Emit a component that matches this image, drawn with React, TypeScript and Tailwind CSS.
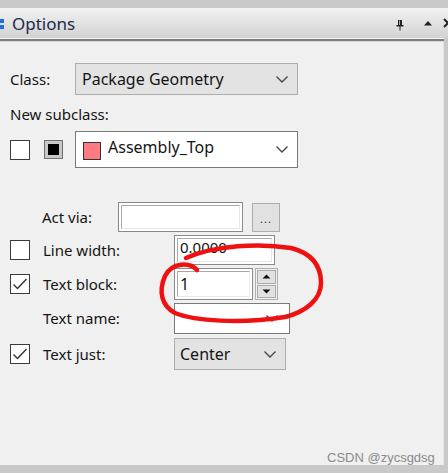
import React from "react";

const font = { fontFamily: '"Noto Sans", "Open Sans", Arial, sans-serif' };

function Chevron() {
  return (
    <svg width="14" height="9" viewBox="0 0 14 9" className="shrink-0">
      <path d="M1.5 1.5 L7 7 L12.5 1.5" fill="none" stroke="#444" strokeWidth="1.3" />
    </svg>
  );
}

function CheckBox({ checked }: { checked?: boolean }) {
  return (
    <div className="w-[20px] h-[20px] bg-white border-[1.5px] border-[#3a3a3a] shrink-0 flex items-center justify-center">
      {checked && (
        <svg width="16" height="14" viewBox="0 0 16 14">
          <path d="M1.5 7.5 L5.5 11.5 L14.5 2" fill="none" stroke="#333" strokeWidth="1.4" />
        </svg>
      )}
    </div>
  );
}

function Sunken({ className, children }: { className: string; children?: React.ReactNode }) {
  return (
    <div className={"border-[1.5px] border-[#8a8a8a] bg-white p-[2px] " + className}>
      <div className="w-full h-full border border-[#a8a8a8] border-r-[#e8e8e8] border-b-[#e8e8e8] bg-white flex items-center px-[2px] text-[15px] leading-none text-[#111]">
        {children}
      </div>
    </div>
  );
}

export default function App() {
  return (
    <div className="w-[448px] h-[473px] bg-[#c9c9c9] flex flex-col overflow-hidden relative" style={font}>
      <div className="h-[8px] shrink-0" />
      {/* header */}
      <div className="h-[30px] shrink-0 bg-gradient-to-b from-[#f2f2f2] to-[#d2d2d2] flex items-center relative">
        <div className="flex flex-col gap-[2px] ml-0 mt-[1px]">
          <div className="w-[4px] h-[4px] bg-[#1e6fd6]" />
          <div className="w-[4px] h-[4px] bg-[#1e6fd6]" />
        </div>
        <span className="ml-[8px] text-[17px] text-[#1d2a4c] leading-none">Options</span>
        <div className="flex-1" />
        <svg width="10" height="12" viewBox="0 0 10 12" className="mr-[18px] mt-[3px]">
          <path d="M3 1 H7 V6 H8.5 V7.5 H1.5 V6 H3 Z M4.5 7.5 V11.5 H5.5 V7.5" fill="#222" />
          <rect x="4" y="1.5" width="1" height="4.5" fill="#aaa" />
        </svg>
        <svg width="10" height="6" viewBox="0 0 10 6" className="mr-[10px]">
          <path d="M1 5.5 L5 1 L9 5.5 Z" fill="#222" />
        </svg>
        <svg width="6" height="10" viewBox="0 0 6 10" className="mr-[-1px]">
          <path d="M1 1 L5 5 L1 9" fill="none" stroke="#222" strokeWidth="2" />
        </svg>
      </div>
      {/* separator */}
      <div className="w-[444px] h-[1px] bg-[#f4f4f4] shrink-0" />
      <div className="w-[444px] h-[2px] bg-[#7d7d7d] shrink-0" />
      <div className="w-[444px] h-[1px] bg-[#d8d8d8] shrink-0" />
      {/* body */}
      <div className="w-[444px] flex-1 bg-[#f0f0f0] border-r border-[#e4e4e4] pl-[10px] flex flex-col text-[15px] text-[#151515] relative">
        {/* Class row */}
        <div className="mt-[21px] h-[32px] flex items-center">
          <span className="w-[65px]">Class:</span>
          <div className="w-[223px] h-[32px] bg-[#e3e3e3] border border-[#adadad] flex items-center pl-[6px] pr-[8px]">
            <span className="flex-1 text-[16px]">Package Geometry</span>
            <Chevron />
          </div>
        </div>
        {/* New subclass */}
        <div className="mt-[7px] h-[24px] flex items-center">New subclass:</div>
        {/* subclass row */}
        <div className="mt-[5px] h-[37px] flex items-center">
          <CheckBox />
          <div className="ml-[14px] w-[19px] h-[19px] border border-[#707070] bg-[#c8c8c8] flex items-center justify-center">
            <div className="w-[11px] h-[11px] bg-black" />
          </div>
          <div className="ml-[12px] w-[223px] h-[37px] bg-white border border-[#7a7a7a] flex items-center pl-[7px] pr-[8px]">
            <div className="w-[18px] h-[18px] bg-[#fc7a80] border border-[#333] mt-[3px]" />
            <span className="ml-[7px] flex-1 text-[16px] -mt-[6px]">Assembly_Top</span>
            <Chevron />
          </div>
        </div>
        {/* Act via */}
        <div className="mt-[34px] h-[30px] flex items-center">
          <span className="ml-[32px] w-[76px]">Act via:</span>
          <Sunken className="w-[125px] h-[30px]" />
          <div className="ml-[9px] w-[28px] h-[29px] bg-[#e1e1e1] border border-[#adadad] flex items-end justify-center pb-[7px]">
            <span className="text-[11px] leading-none tracking-[1px] text-[#333]">...</span>
          </div>
        </div>
        {/* Line width */}
        <div className="mt-[3px] h-[30px] flex items-center">
          <CheckBox />
          <span className="ml-[13px] w-[131px]">Line width:</span>
          <Sunken className="w-[101px] h-[30px]">
            <span className="-mt-[6px]">0.0000</span>
          </Sunken>
        </div>
        {/* Text block */}
        <div className="mt-[3px] h-[32px] flex items-center">
          <CheckBox checked />
          <span className="ml-[13px] w-[131px]">Text block:</span>
          <Sunken className="w-[79px] h-[32px]">
            <span className="text-[16px]">1</span>
          </Sunken>
          <div className="ml-[2px] h-[32px] w-[23px] border border-[#b0b0b0] flex flex-col p-[1px] gap-[1px]">
            <div className="flex-1 bg-[#e1e1e1] border border-[#adadad] flex items-center justify-center">
              <svg width="9" height="5" viewBox="0 0 9 5"><path d="M0.5 4.5 L4.5 0.5 L8.5 4.5 Z" fill="#111" /></svg>
            </div>
            <div className="flex-1 bg-[#e1e1e1] border border-[#adadad] flex items-center justify-center">
              <svg width="9" height="5" viewBox="0 0 9 5"><path d="M0.5 0.5 L4.5 4.5 L8.5 0.5 Z" fill="#111" /></svg>
            </div>
          </div>
        </div>
        {/* Text name */}
        <div className="mt-[3px] h-[31px] flex items-center">
          <span className="ml-[33px] w-[131px]">Text name:</span>
          <div className="w-[116px] h-[31px] bg-white border border-[#7a7a7a] flex items-center justify-end pr-[10px]">
            <Chevron />
          </div>
        </div>
        {/* Text just */}
        <div className="mt-[4px] h-[32px] flex items-center">
          <CheckBox checked />
          <span className="ml-[13px] w-[131px]">Text just:</span>
          <div className="w-[112px] h-[32px] bg-[#e3e3e3] border border-[#adadad] flex items-center pl-[5px] pr-[8px]">
            <span className="flex-1 text-[16px]">Center</span>
            <Chevron />
          </div>
        </div>
        <span className="absolute left-[327px] bottom-[1px] text-[13px] text-[#8a8a8a] leading-none" style={{ fontFamily: '"Liberation Sans", Arial, sans-serif' }}>
          CSDN @zycsgdsg
        </span>
      </div>
      <div className="h-[8px] shrink-0" />
      {/* red annotation */}
      <svg className="absolute left-0 top-0 pointer-events-none" width="448" height="473" viewBox="0 0 448 473">
        <path
          d="M197 270 C190 262 172 262 165 276 C158 292 162 306 175 313 C195 321 240 324 285 317 C305 312 321 300 321 283 C321 265 311 253 291 248 C260 243 215 245 186 258"
          fill="none"
          stroke="#ee1111"
          strokeWidth="4.5"
          strokeLinecap="round"
        />
      </svg>
    </div>
  );
}
